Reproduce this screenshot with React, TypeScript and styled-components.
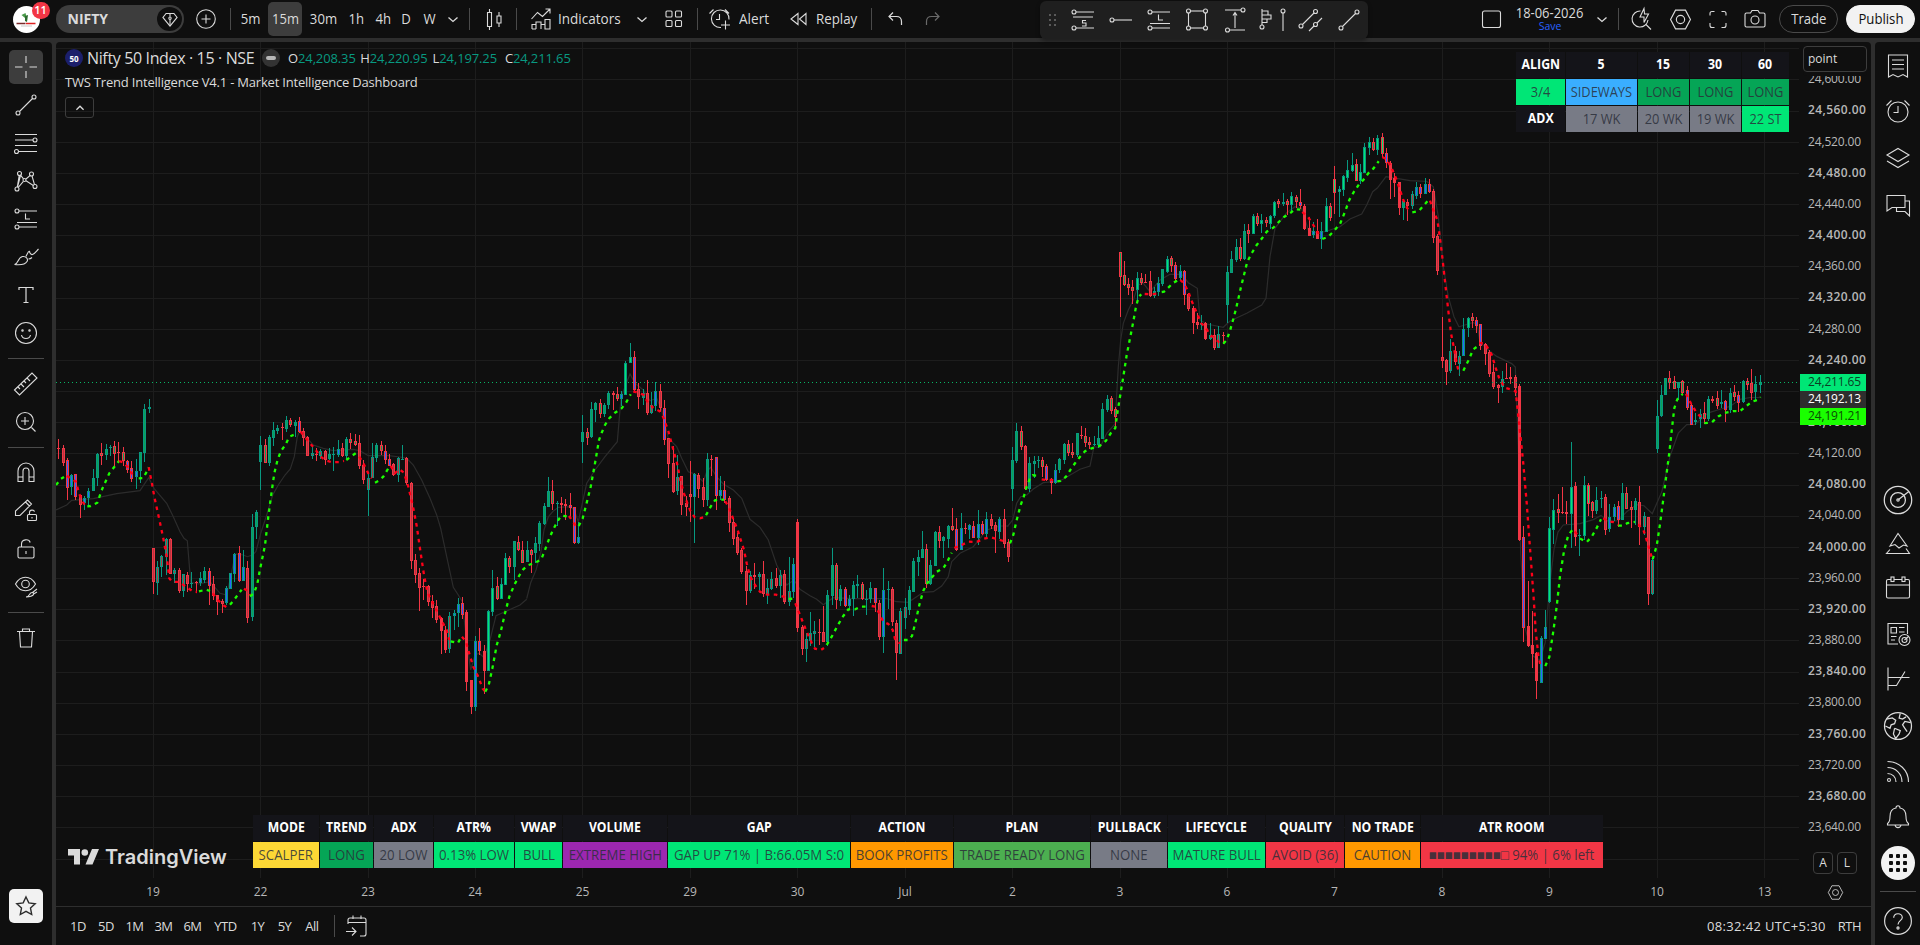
import { Fragment, ReactNode } from "react"
import styled, { createGlobalStyle } from "styled-components"

const UP = "#089981"
const DOWN = "#f23645"

const INNER: Record<string, string> = {
  G: "#0aa356",
  E: "#00e676",
  B: "#2962ff",
  R: "#b53640",
}

// bar = border/fill code, then high, body top, body bottom, low
const SESSIONS = [
  { start: -22, base: 330, unit: 3, bars: "rR 327 354 357 387,rR 345 354 399 408,rB 384 390 474 510,gB 432 435 471 494,rB 432 432 501 510,rR 495 495 525 564,gB 498 504 519 540,gB 474 483 504 532,gG 417 444 483 483,gG 369 372 444 468,rG 339 369 378 405,gG 342 357 375 390,gG 345 351 354 378,rG 333 348 372 414,rR 336 366 369 393,rG 351 366 394 408,rB 390 393 420 429,rB 393 414 447 456,gB 387 423 441 477,gG 366 366 423 459,gG 222 237 369 396,gG 207 231 237 249" },
  { start: 0, base: 330, unit: 3, bars: "rR 654 654 756 792,gR 693 711 759 795,gR 675 678 711 741,gR 624 627 681 735,rR 624 627 732 732,gR 714 720 732 759,rR 714 720 783 789,gR 732 732 783 801,rR 726 735 762 786,gS 726 759 762 774,rR 753 757 760 789,gB 726 744 759 768,gG 711 723 750 759,rB 714 723 768 825,rR 738 762 798 810,rS 795 795 816 855,rR 807 813 822 849,gB 768 774 819 825,gB 729 729 777 777,gB 669 672 732 756,rB 648 669 753 756,gB 660 711 753 753,rR 693 714 864 879,gG 552 591 861 873,gG 540 546 591 627" },
  { start: 25, base: 330, unit: 3, bars: "gG 318 345 396 480,rG 327 345 399 399,gG 315 321 399 408,gG 276 300 324 348,gG 285 294 303 312,rR 279 291 294 330,gG 258 270 297 306,rG 264 270 285 291,gG 270 276 288 321,rB 261 273 306 309,rR 294 303 324 348,rR 318 321 378 378,gR 348 369 378 387,rR 354 372 375 393,gR 357 363 378 387,rR 360 363 390 405,gG 354 372 387 390,gR 351 372 375 423,gB 330 357 375 381,rR 339 354 378 381,gG 321 327 378 387,rG 309 327 339 357,rG 312 333 345 348,rR 315 339 408 417,rR 390 405 450 462" },
  { start: 50, base: 330, unit: 3, bars: "gR 426 444 480 558,gR 339 381 444 444,gG 339 345 384 396,rG 333 345 363 375,rB 345 363 390 402,rB 372 387 408 408,rR 399 402 435 438,gR 381 384 435 456,gG 345 387 390 390,rR 381 384 459 465,rR 456 459 693 717,rR 672 690 735 759,rR 714 729 774 843,rR 747 768 771 810,rR 765 768 816 828,rR 795 813 834 864,rR 810 828 870 879,rS 861 864 903 972,rS 888 900 960 969,gR 846 858 957 969,gB 840 849 858 900,gB 804 822 849 891,rB 801 819 855 867,rS 840 846 1056 1083,rS 1050 1050 1131 1152" },
  { start: 75, base: 330, unit: 3, bars: "gB 918 933 1131 1143,rB 894 933 963 975,rS 945 963 1023 1092,gE 840 843 1023 1023,gE 720 774 846 858,rG 741 768 807 810,gE 744 762 807 807,gE 669 684 765 765,rG 678 684 711 729,gG 633 633 711 750,rG 618 636 660 663,rG 633 660 699 699,gG 633 660 696 696,rG 657 660 675 729,gG 621 639 669 699,gG 573 579 642 663,gG 519 528 582 585,gG 441 483 531 531,rG 450 483 522 540,gG 513 519 522 588,rR 501 519 525 549,rR 507 522 528 570,rB 489 525 534 567,rB 531 531 639 642,gB 576 621 639 642" },
  { start: 100, base: 330, unit: 3, bars: "gG 255 306 336 399,rG 294 306 324 345,gG 216 237 321 324,gG 216 219 240 276,rG 207 219 252 264,gG 219 225 252 261,gG 183 189 225 237,rG 183 189 195 240,rG 171 192 207 213,gB 183 192 207 228,gE 93 99 195 195,gE 39 81 99 99,rB 63 81 180 183,rR 159 177 201 237,gR 177 189 204 225,rR 150 189 249 255,gR 186 225 249 252,gB 156 183 228 243,rR 162 183 234 246,rB 210 234 330 345,rR 324 324 402 444,rR 348 399 486 489,gR 375 441 483 495,rR 438 438 525 555,rR 498 519 531 558" },
  { start: 125, base: 330, unit: 3, bars: "rR 393 492 501 576,gB 429 432 501 639,rR 429 435 477 504,rR 444 471 510 531,gG 369 387 510 528,rR 375 387 390 438,rB 381 381 498 540,gB 438 480 498 510,rB 453 480 510 519,rR 498 504 579 606,rR 564 576 627 645,rR 609 621 669 675,rR 654 660 726 732,rR 708 723 783 825,gR 723 735 783 789,rR 699 735 741 777,gR 726 732 741 780,rR 693 732 792 801,gR 747 774 792 822,gR 726 747 777 780,rR 714 744 768 774,gR 720 735 768 804,rR 720 732 816 822,gR 681 783 816 828,gB 684 702 786 804" },
  { start: 150, base: 330, unit: 3, bars: "rS 567 576 894 906,rR 885 891 957 975,gR 909 927 957 996,gR 846 909 933 948,gR 873 903 912 951,rR 867 906 909 945,rR 828 906 936 936,gG 780 795 936 948,gG 654 705 798 825,rG 699 705 810 837,gG 765 777 813 828,rB 771 777 828 831,gB 795 807 828 840,gG 753 765 807 858,gG 735 762 768 804,rG 756 762 807 810,gG 780 807 810 855,gG 756 774 807 819,rB 774 774 819 846,rR 810 819 921 930,gB 714 780 921 969,gG 753 777 780 837,rR 771 777 876 888,rR 870 879 969 1050,gR 834 843 972 972" },
  { start: 175, base: 330, unit: 3, bars: "gR 804 831 864 897,gG 768 780 840 855,gG 684 693 786 786,gG 660 681 696 738,gG 603 657 684 684,rG 642 657 762 774,gG 690 705 762 765,gG 603 606 708 708,rG 588 606 633 654,gG 618 621 633 684,gG 585 588 627 654,rG 534 588 600 603,rB 564 597 660 663,gB 549 594 660 660,rR 579 594 597 612,gB 582 585 600 627,rB 573 588 624 624,gB 540 582 624 645,rB 573 582 612 615,gB 546 567 612 624,rR 552 567 588 597,rR 576 585 603 669,gB 561 567 606 627,rR 537 567 642 654,rR 627 636 681 696" },
  { start: 200, base: 120, unit: 3, bars: "gG 981 1020 1107 1143,gG 909 933 1023 1029,rG 918 933 981 990,rR 975 978 1107 1110,gG 1011 1029 1107 1116,gG 1008 1023 1032 1074,gG 1008 1020 1023 1044,rG 1011 1020 1041 1071,rB 1032 1038 1080 1083,rB 1074 1077 1089 1122,gB 1032 1050 1089 1092,gG 1014 1017 1050 1059,gG 969 972 1020 1032,rG 960 972 999 1008,rG 969 996 1005 1014,gG 939 939 1005 1011,rR 918 945 948 957,rG 924 948 969 981,rG 951 966 975 987,gG 948 972 975 978,gG 918 954 975 984,gG 849 867 957 957,gG 825 837 870 876,rG 828 834 873 882,rG 861 867 891 924" },
  { start: 225, base: 120, unit: 3, bars: "rG 396 396 471 591,rG 423 465 495 498,rG 474 492 504 525,rG 480 501 513 552,gE 456 474 510 543,rG 459 474 489 495,rG 462 486 489 489,rR 453 483 528 531,gG 501 513 528 534,gB 471 489 516 528,gG 447 447 492 498,gE 408 417 456 459,rG 408 414 438 456,rB 426 435 477 483,gB 435 453 474 480,rB 450 453 525 555,rR 519 522 567 573,rS 558 564 609 642,rR 579 606 615 627,gR 585 609 615 630,rS 606 609 657 660,gR 609 645 657 660,rR 627 645 684 690,gR 618 642 684 684,rR 636 645 648 672" },
  { start: 250, base: 120, unit: 3, bars: "gG 438 456 555 609,gG 393 417 459 459,gG 357 381 420 426,rG 354 381 417 423,gG 312 333 417 420,rG 312 330 342 369,gE 282 288 342 342,rG 279 288 312 318,gE 282 300 312 339,rG 291 300 309 321,gE 285 288 312 327,gE 243 246 288 294,rG 237 243 252 264,gG 219 246 252 258,rG 237 243 255 285,gE 216 228 255 279,rG 225 231 246 264,rB 207 246 258 267,rS 252 258 327 330,rS 291 324 348 348,gB 306 333 345 354,rS 297 333 357 357,gB 306 333 357 387,gE 234 258 336 336,rG 249 258 294 303" },
  { start: 275, base: 120, unit: 3, bars: "rE 138 177 219 282,gE 198 207 216 291,gE 165 168 210 228,gE 120 150 174 186,gE 99 135 153 156,rE 117 132 183 183,gE 132 156 183 192,gE 69 81 159 159,gE 51 66 84 105,rG 54 66 90 93,gE 45 54 90 105,rE 39 51 102 111,rB 84 99 129 144,rS 123 129 180 237,rS 159 174 189 231,rS 186 186 264 285,gG 237 243 264 300,rR 237 246 258 303,gR 213 222 258 267,gB 186 201 228 237,rB 192 201 222 234,gB 174 192 222 222,rB 177 192 216 219,rR 207 213 354 369,rR 342 348 453 465" },
  { start: 300, base: 160, unit: 2.8, bars: "rR 440 552 563 582,rR 557 560 594 630,gR 501 535 591 596,rR 521 535 566 574,gR 535 549 571 605,gB 442 473 549 549,gE 440 442 470 496,rG 428 440 451 470,rB 440 448 465 484,rB 459 459 521 532,rR 512 515 543 574,rR 532 538 599 608,rR 571 594 636 641,rR 627 630 638 680,gR 591 613 636 652,rS 568 610 613 613,rS 580 608 613 627,rR 602 608 638 661,rS 627 633 1064 1067,rB 1025 1056 1310 1350,rS 1179 1305 1361 1364,rS 1263 1358 1383 1422,rS 1378 1380 1459 1509,gB 1333 1338 1464 1464,gB 1260 1308 1341 1341" },
  { start: 325, base: 160, unit: 2.8, bars: "gE 1000 1030 1238 1240,gE 949 980 1036 1075,rG 935 977 988 1017,rS 916 986 989 991,rR 955 986 991 1019,gE 790 916 991 1086,rS 902 913 1056 1081,gG 1033 1050 1053 1109,gE 885 910 1053 1064,rE 904 910 963 997,rG 955 958 983 1002,gG 916 952 983 991,gG 927 946 949 974,rR 935 944 1036 1050,gB 963 1000 1033 1042,gB 963 972 1000 1011,rB 955 969 1008 1028,gG 904 932 1008 1008,rG 916 932 977 977,rG 955 972 980 1030,gG 946 955 980 1022,rR 913 958 1028 1078,gR 986 997 1028 1050,rR 1000 1000 1215 1246,gR 1117 1120 1215 1218" },
  { start: 350, base: 160, unit: 2.8, bars: "gG 672 717 809 820,gG 630 658 717 720,gG 610 610 658 658,rG 591 610 624 641,rG 605 619 641 641,gG 622 622 638 672,rG 616 619 652 655,rB 633 644 694 700,rB 683 686 742 742,gB 708 728 734 742,gB 697 711 725 750,rG 678 708 725 739,gG 661 669 725 731,rG 661 669 675 680,rG 647 666 689 697,gG 644 678 683 694,rB 672 675 700 734,gG 638 652 700 708,rG 630 650 664 675,rB 647 658 680 706,gG 616 619 678 680,rG 610 619 630 644,rR 585 624 652 672,gG 605 627 650 675,gG 602 622 630 652" },
]

// trend line and baseline, in blocks that share one origin and scale
const LINES = [
  {
    x: 50, y: 330, sx: 3, sy: 3,
    trend: [
      "g 18,465 32,447 42,441",
      "r 50,438 62,445 78,455 87,490 98,516 105,525",
      "g 112,529 122,528 142,518 157,476 178,430 195,408 207,393",
      "r 207,393 222,398 232,410 245,430 258,440",
      "g 266,445 280,444 290,425 296,412",
      "r 296,412 306,461 313,500 330,578 340,625 350,680 358,745 366,755 388,756 410,772 430,785 441,786",
      "g 447,784 468,779 480,783",
      "r 488,790 505,811 517,824 530,832",
      "g 540,824 552,810 568,788 575,779",
      "r 582,776 592,782 600,795",
      "g 600,799 612,790 622,762 630,718 645,646 655,560 665,484 673,430 683,388 693,363 706,345 718,320 736,313 744,311",
      "r 752,305 765,322 780,340 795,357 810,378 825,390 845,397 870,396 882,393",
      "g 889,390 905,378 918,369",
      "r 928,380 940,400 955,430 965,445",
      "g 975,458 985,453 1000,440 1015,415",
      "r 1022,408 1035,430 1048,418 1062,428 1075,470 1088,525 1100,588 1112,670 1122,735 1132,785 1145,812 1160,842 1175,872 1190,900 1198,930",
      "g 1202,934 1224,939 1234,920",
      "r 1236,920 1248,935 1256,965 1270,1010 1285,1040 1298,1076 1306,1085",
      "g 1306,1085 1316,1065 1327,1016 1340,946 1352,905 1365,850 1378,800 1393,765 1407,738 1420,718 1433,706 1456,698 1474,688 1485,660 1498,625 1510,598 1525,570 1534,557 1555,560",
    ],
    base: "18,540 50,525 65,511 130,506 200,491 270,482 296,443 312,475 350,520 370,560 390,605 402,625 412,632 422,757 445,762 480,755 510,790 530,795 541,745 556,672 580,675 592,680 608,675 618,664 632,610 650,555 668,495 685,465 705,435 721,417 733,380 742,320 748,305 765,318 790,345 820,355 850,362 910,358 930,362 955,377 1010,376 1050,381 1070,385 1090,405 1115,450 1140,505 1160,555 1172,595 1190,680 1210,772 1225,795 1237,815 1250,935 1262,1020 1275,975 1288,970 1302,983 1320,930 1338,857 1370,843 1410,825 1430,808",
  },
  {
    x: 520, y: 330, sx: 3, sy: 3,
    trend: [
      "r 147,558 160,577 170,592",
      "g 176,588 188,565 200,518 212,470 225,400 237,330 245,308 255,285 268,265 285,248 304,236 318,218 332,193",
      "r 340,184 358,190 372,195 382,215 398,232 418,243 430,262 445,303 457,348 470,395 482,455 492,490 502,520 512,545 524,562 540,565 550,562",
      "g 558,556 572,530 585,511 600,507 612,510",
      "r 616,514 628,535 640,568 652,597 664,635 672,660 680,700 690,738 705,765 720,785 742,794 768,794 790,800 805,806",
      "g 806,807 820,806",
      "r 826,820 838,850 848,875 862,910 875,938 885,956 902,960 912,954",
      "g 920,945 935,920 955,883 970,858 985,838 1005,838 1022,830 1050,830",
      "r 1055,828 1066,830 1078,850 1090,875 1105,882 1118,900 1126,930 1140,940",
      "g 1152,930 1165,930 1176,918 1188,870 1198,825 1210,782 1222,760 1236,742 1250,725 1270,715 1282,695 1295,668",
      "r 1303,654 1325,645 1345,635 1370,636 1392,626 1412,622 1435,628 1452,634",
    ],
    base: "20,806 32,758 48,720 62,670 72,600 85,560 100,543 115,532 150,530 163,540 175,575 188,515 200,460 225,420 255,380 292,335 303,205 315,170 330,132 345,160 370,180 390,212 410,205 425,240 445,325 470,350 485,385 505,425 525,432 550,455 560,425 572,412 590,440 610,462 640,480 665,505 690,568 720,592 745,630 770,705 800,765 822,750 840,778 870,797 890,808 910,824 940,803 1000,806 1100,806 1130,815 1165,817 1210,787 1240,785 1265,768 1285,740 1295,695 1320,670 1360,650 1400,600 1440,588 1466,588",
  },
  {
    x: 1000, y: 120, sx: 3, sy: 3,
    trend: [
      "g 30,1270 40,1245 50,1200 62,1155 72,1128 80,1100 90,1075 98,1066 115,1067",
      "r 125,1078 140,1080 155,1080 166,1081",
      "g 172,1084 182,1083 198,1070 212,1048 225,1030 240,1010 255,994 275,985 300,977 318,962 332,940 346,924 352,880 360,830 370,770 380,705 390,655 400,605 408,560 416,530 424,523",
      "r 434,522 450,523 464,522 476,515",
      "g 485,516 492,515 508,500 520,488 532,482",
      "r 541,480 552,490 565,515 576,545 590,578 604,610 616,620 630,645 645,655 658,668",
      "g 670,671 680,660 690,632 702,590 712,550 722,505 732,465 742,425 756,398 770,375 786,355 800,335 820,323 836,306 852,291 870,280 885,268 901,269",
      "r 907,276 925,292 940,315 952,335 960,350",
      "g 967,357 985,350 1000,335 1020,312 1035,275 1048,240 1062,215 1077,193 1090,180 1105,160 1120,146 1136,124",
      "r 1147,111 1160,118 1175,145 1188,175 1200,210 1210,240 1222,265 1232,275",
      "g 1237,277 1256,273 1270,258 1287,238",
      "r 1290,242 1300,270 1312,300 1318,340 1325,395 1333,465 1340,530 1347,590 1353,640 1362,685 1370,730 1378,762",
    ],
    base: "22,1220 38,1200 50,1150 62,1130 80,1125 100,1107 130,1088 180,1083 240,1048 270,1038 282,980 300,983 320,940 345,912 355,740 362,660 370,610 385,570 400,540 415,495 430,490 450,515 480,480 510,463 545,463 565,488 592,505 600,600 620,612 670,622 690,603 740,580 785,555 798,535 810,410 825,325 860,278 885,260 905,265 925,330 955,340 990,330 1020,320 1050,297 1085,282 1100,255 1118,215 1132,204 1158,170 1190,175 1230,182 1280,184 1300,200 1315,290 1330,440 1345,530 1362,590 1377,621",
  },
  {
    x: 1400, y: 160, sx: 3, sy: 2.8,
    trend: [
      "g 190,590 205,562 220,530 232,522",
      "r 238,512 256,515 275,545 288,585 298,612 315,638 335,643 347,648 352,690 360,760 370,850 380,960 388,1060 395,1150 402,1240 407,1320 415,1385 422,1420",
      "g 436,1417 448,1392 460,1320 470,1250 480,1165 492,1095 505,1050 520,1033",
      "r 524,1040 535,1052",
      "g 540,1060 560,1070 575,1055 590,1030 603,1006",
      "r 610,1003 625,1012 640,1014 655,1022",
      "g 655,1024 668,1024 682,1017 705,1013",
      "r 715,1020 730,1035 742,1070 755,1112",
      "g 758,1118 770,1080 780,1020 790,950 798,890 808,820 816,750 823,695 832,670 848,655",
      "r 858,655 872,680 888,705 905,722",
      "g 913,737 935,735 955,718 975,708 1000,703 1020,703 1040,688 1055,677 1072,672 1082,664",
    ],
    base: "177,467 220,455 232,462 240,510 260,528 290,550 335,570 346,580 355,800 362,1100 375,1310 400,1390 420,1400 436,1350 448,1200 462,1090 474,1042 490,1022 540,1018 580,1007 603,995 625,1012 655,1010 680,985 710,965 732,968 757,990 785,930 810,830 835,765 860,741 885,740 925,708 960,698 990,690 1020,670 1050,665 1082,665",
  },
]

const DAYS = ["19", "22", "23", "24", "25", "29", "30", "Jul", "2", "3", "6", "7", "8", "9", "10", "13"]
const DAY_X = [153, 260, 368, 475, 582, 690, 797, 905, 1012, 1120, 1227, 1334, 1442, 1549, 1657, 1764]
const PRICES = Array.from({ length: 25 }, (_, i) => 24600 - i * 40)

const barX = (i: number) => Math.floor(153.3 + i * 4.2965)

// the tick right behind the price tags stays blank
const priceLabel = (p: number) => (p === 24200 ? "" : `${p.toLocaleString("en-US")}.00`)

const project = (pts: string, l: { x: number; y: number; sx: number; sy: number }) =>
  pts
    .split(" ")
    .map((p) => {
      const [a, b] = p.split(",").map(Number)
      return `${(l.x + a / l.sx).toFixed(1)},${(l.y + b / l.sy).toFixed(1)}`
    })
    .join(" ")

function Candles() {
  return (
    <>
      {SESSIONS.map((s) =>
        s.bars.split(",").map((bar, n) => {
          const [code, ...nums] = bar.split(" ")
          const [high, top, bottom, low] = nums.map((v) => Math.round(s.base + Number(v) / s.unit))
          const x = barX(s.start + n)
          const edge = code[0] === "g" ? UP : DOWN
          const h = Math.max(1, bottom - top)
          return (
            <Fragment key={`${s.start}-${n}`}>
              <rect x={x} y={high} width={1} height={Math.max(1, low - high)} fill={edge} />
              <rect x={x - 1} y={top} width={3} height={h} fill={edge} />
              {h > 2 && code[1] !== "S" && (
                <rect x={x} y={top + 1} width={1} height={h - 2} fill={INNER[code[1]]} />
              )}
            </Fragment>
          )
        })
      )}
    </>
  )
}

function Plot() {
  return (
    <svg width={1744} height={836} viewBox="56 42 1744 836" shapeRendering="crispEdges">
      {DAY_X.map((x) => (
        <rect key={x} x={x} y={42} width={1} height={836} fill="#1d1d1d" />
      ))}
      {Array.from({ length: 27 }, (_, i) => (
        <rect key={i} x={56} y={Math.floor(48.7 + 31.17 * i)} width={1743} height={1} fill="#1d1d1d" />
      ))}
      <g shapeRendering="auto" fill="none" stroke="#2c2c2c" strokeWidth={1.2}>
        {LINES.map((l) => (
          <polyline key={l.x} points={project(l.base, l)} />
        ))}
      </g>
      <Candles />
      <g shapeRendering="auto" fill="none" strokeWidth={2.3}>
        {LINES.map((l) =>
          l.trend.map((t) => (
            <polyline
              key={t}
              points={project(t.slice(2), l)}
              stroke={t[0] === "g" ? "#1aff00" : "#ff0019"}
              strokeDasharray="3.6 4.4"
            />
          ))
        )}
      </g>
      <line x1={56} x2={1799} y1={382.5} y2={382.5} stroke="#08b565" strokeDasharray="1 3" />
    </svg>
  )
}

type IconProps = { size?: number; w?: number; children: ReactNode }

function Icon({ size = 28, w = 1.1, children }: IconProps) {
  return (
    <svg width={size} height={size} viewBox="0 0 28 28" fill="none" stroke="currentColor" strokeWidth={w}>
      {children}
    </svg>
  )
}

const Chevron = () => (
  <Icon w={1.3}><path d="M9.5 12.500l4.500 4 4.500-4" /></Icon>
)

const Hexagon = ({ size = 28 }) => (
  <Icon size={size}>
    <path d="M9.200 5h9.600l4.800 9-4.800 9H9.200l-4.800-9z" />
    <circle cx="14" cy="14" r="4" />
  </Icon>
)

const TrendLine = () => (
  <Icon>
    <circle cx="6" cy="22" r="2" />
    <circle cx="22" cy="6" r="2" />
    <path d="M7.500 20.500l13-13" />
  </Icon>
)

const LongPosition = ({ letter = "L" }) => (
  <Icon>
    <circle cx="5" cy="6" r="2" />
    <circle cx="5" cy="22" r="2" />
    <path d="M7 6h18M7 22h18" />
    {letter === "L" ? <path d="M5 17.500h20M13.500 8.500v5.500H18" /> : <path d="M4 11h20M17 14.500h-3.500v2.500H17v3h-4" />}
  </Icon>
)

const LEFT_TOOLS: Record<string, ReactNode> = {
  trend: <TrendLine />,
  fib: (
    <Icon>
      <path d="M3 5.500h22M3 11h18M3 16.500h22M6 22.500h19" />
      <circle cx="23" cy="11" r="2" />
      <circle cx="4.500" cy="22.500" r="2" />
    </Icon>
  ),
  pattern: (
    <Icon>
      <circle cx="7.500" cy="6.500" r="2" />
      <circle cx="19.500" cy="7" r="2" />
      <circle cx="5" cy="22" r="2" />
      <circle cx="12.500" cy="13" r="1.500" />
      <circle cx="23" cy="19.500" r="2" />
      <path d="M7.200 8.500L5.300 20M8.500 8.200l3 3.600M6.200 20.500l5.200-6.200M14 12l4.200-3.700M20 9l2.500 8.600M14 13.800l7.300 4.700M8.500 8.500l-3 11.500" />
    </Icon>
  ),
  position: <LongPosition />,
  brush: (
    <Icon>
      <path d="M2.500 21.500c4-.5 3-7 8-8 3.500-.5 6 2.500 4.500 5-2 3.500-8 3.500-12.500 3zM14 13.500c1-2 2-5 3.500-5.500M16.500 16c1.500 0 2.500-.5 3.500-1.500M17.500 8c0 2 1.500 4 3 3.500 2.500-1 4-3.500 6-5.500" />
    </Icon>
  ),
  text: (
    <Icon w={1.2}><path d="M7 9V6.500h14V9M14 6.500v15M11.500 21.500h5" /></Icon>
  ),
  smile: (
    <Icon>
      <circle cx="14" cy="14" r="10.500" />
      <path d="M9.500 16c.5 2.500 2.300 3.500 4.500 3.500s4-1 4.500-3.500" />
      <circle cx="10.500" cy="11.500" r=".7" />
      <circle cx="17.500" cy="11.500" r=".7" />
    </Icon>
  ),
}

const MEASURE_TOOLS: Record<string, ReactNode> = {
  ruler: (
    <Icon>
      <path d="M2.500 20L20 3l5 5L7.500 25zM6 17l2 2M9 14l3 3M12 11l2 2M15 8l3 3" />
    </Icon>
  ),
  zoom: (
    <Icon>
      <circle cx="13" cy="13" r="8.500" />
      <path d="M19.500 19.500l4 4M9 13h8M13 9v8" />
    </Icon>
  ),
}

const LOCK_TOOLS: Record<string, ReactNode> = {
  magnet: (
    <Icon>
      <path d="M6 23.500V13a8 8 0 0116 0v10.500h-5V13a3 3 0 00-6 0v10.500zM6 19h5M17 19h5" />
    </Icon>
  ),
  pencil: (
    <Icon>
      <path d="M3.500 19.500V15L15.500 4l4 4L8 19.500zM13.500 6l4 4" />
      <rect x="15.500" y="18.500" width="9" height="6" rx="1" />
      <path d="M17.500 18.500v-2c0-3 4.500-3 5-.8M20 21v1.500" />
    </Icon>
  ),
  lock: (
    <Icon>
      <rect x="6" y="13" width="16" height="11" rx="1.500" />
      <path d="M9.500 13v-3c0-5 7.500-5.500 8.700-1.500M14 17v3" />
    </Icon>
  ),
  eye: (
    <Icon>
      <path d="M3.500 12c5-9 15-9 20 0-5 9-15 9-20 0z" />
      <circle cx="13.500" cy="12" r="3.800" />
      <path d="M14 25c4 0 3-4.500 6-4.500s3 4-6 4.500zM20.500 20.500l4.500-3.500M21.500 22l3.500-2" stroke="#0f0f0f" strokeWidth="4" />
      <path d="M14 25c4 0 3-4.500 6-4.500s3 4-6 4.500zM20.500 20.500l4.500-3.500M21.500 22l3.500-2" />
    </Icon>
  ),
}

const Trash = () => (
  <Icon>
    <path d="M5 7.500h18M7.500 7.500l1 15.500h11l1-15.500M10.500 7.500V5h7v2.500" />
  </Icon>
)

const RIGHT_TOOLS: { h: number; icon: ReactNode }[] = [
  { h: 48, icon: <Icon><path d="M4.500 3h19v22l-4.500-2.500-5 2.500-5-2.500L4.500 25zM8 8h12M8 12.500h12M8 17h12" /></Icon> },
  { h: 42, icon: <Icon><circle cx="14" cy="15" r="10" /><path d="M14 9v6.500H9.500M2.500 8.500l5-5M25.500 8.500l-5-5" /></Icon> },
  { h: 51, icon: <Icon><path d="M3 11l11-6.500L25 11l-11 6.500zM3 17l11 6.500L25 17" /></Icon> },
  { h: 43, icon: <Icon><path d="M3 20V4.500h18v12H8zM21 10h4.500v15L21 20.500h-8.500v-4" /></Icon> },
]

const LOWER_TOOLS: { h: number; icon: ReactNode }[] = [
  { h: 44, icon: <Icon size={32}><circle cx="14" cy="14" r="12" /><circle cx="14" cy="14" r="6.500" /><circle cx="14" cy="14" r="1" /><path d="M14.500 13.500l9-7" /></Icon> },
  { h: 42, icon: <Icon><path d="M6 17L14 4.500l9 12.500-3.500-1-4.500 3-4-3.500zM6 20.500l-3.500 4h23L22 19.500" /></Icon> },
  { h: 48, icon: <Icon><rect x="2.500" y="5.500" width="23" height="18.500" rx="1.500" /><path d="M2.500 11h23" /><rect x="7" y="3" width="3" height="4.500" fill="#0f0f0f" /><rect x="18" y="3" width="3" height="4.500" fill="#0f0f0f" /></Icon> },
  { h: 44, icon: <Icon><path d="M14 24H4V3.500h19.500V14M7 7.500h5.500V13H7zM15 7.500h5.500M15 12h5.500M7 16.500h5.500M7 20h4" /><circle cx="20.500" cy="20" r="5.500" /><circle cx="20.500" cy="20" r="2.500" /><path d="M20.500 20l4-3.500" /></Icon> },
  { h: 46, icon: <Icon><path d="M4 2.500v23M4 12.500h21.500M4 20.500h8.500L21 6.500" /></Icon> },
  { h: 48, icon: <Icon size={32}><circle cx="14" cy="14" r="11.800" /><path d="M4 8l5-1 3 2-1 3-3 1-1 3-4-2M11 16l5 2-1 3-3 4-2-4 1-5M16 3l-1 4 3 1 3-2M25 11l-5-1-2 3 2 3 2 3" /></Icon> },
  { h: 42, icon: <Icon><circle cx="5" cy="23" r="1.500" /><path d="M3.500 16.500c5 0 8.500 3.500 8.500 8.500M3.500 10.500c8 0 14.500 6 14.500 14.500M3.500 4.500C15 4.500 24.500 13 24.500 25" /></Icon> },
  { h: 50, icon: <Icon><path d="M3.500 20.500c2.500-1.500 2.500-4 2.500-7C6 7.500 9 5.500 12 5c0-3 4-3 4 0 3 .5 6 2.500 6 8.500 0 3 0 5.500 2.500 7V22h-21zM11 22c.5 3.500 5.500 3.500 6 0" /></Icon> },
]

const FAVORITES: ReactNode[] = [
  <LongPosition letter="S" />,
  <Icon><circle cx="5" cy="14" r="2" /><path d="M7 14h18" /></Icon>,
  <LongPosition />,
  <Icon><rect x="5.500" y="5" width="17" height="17" /><g fill="#1f1f1f"><circle cx="5.500" cy="5" r="2" /><circle cx="22.500" cy="5" r="2" /><circle cx="5.500" cy="22" r="2" /><circle cx="22.500" cy="22" r="2" /></g></Icon>,
  <Icon><path d="M4 4h16M8.500 24H24M14 22V7M12 9.500L14 6.500l2 3" /><circle cx="22" cy="4" r="2" /><circle cx="6.500" cy="24" r="2" /></Icon>,
  <Icon><path d="M3 3v16M3 5h6v4H3M3 9h9v4H3M3 13h5v3.500H3M24 7v18" /><circle cx="3" cy="21" r="2" /><circle cx="24" cy="5" r="2" /></Icon>,
  <Icon><path d="M5.500 18.500L17 7M12 25l5-5M20 17l5-5" /><circle cx="4" cy="20" r="2" /><circle cx="18.500" cy="5.500" r="2" /><circle cx="18.500" cy="18.500" r="2" /></Icon>,
  <TrendLine />,
]

const ALIGN_ROWS: [string, string][][] = [
  [["ALIGN", ""], ["5", ""], ["15", ""], ["30", ""], ["60", ""]],
  [["3/4", "#00e676"], ["SIDEWAYS", "#3aaeff"], ["LONG", "#05a556"], ["LONG", "#05a556"], ["LONG", "#05a556"]],
  [["ADX", ""], ["17 WK", "#787b86"], ["20 WK", "#787b86"], ["19 WK", "#787b86"], ["22 ST", "#00e676"]],
]

const STATUS: [string, string, string][] = [
  ["MODE", "SCALPER", "#fdd835"],
  ["TREND", "LONG", "#05a556"],
  ["ADX", "20 LOW", "#787b86"],
  ["ATR%", "0.13% LOW", "#00e676"],
  ["VWAP", "BULL", "#00e676"],
  ["VOLUME", "EXTREME HIGH", "#9c27b0"],
  ["GAP", "GAP UP 71% | B:66.05M S:0", "#00e676"],
  ["ACTION", "BOOK PROFITS", "#ff9800"],
  ["PLAN", "TRADE READY LONG", "#4caf50"],
  ["PULLBACK", "NONE", "#787b86"],
  ["LIFECYCLE", "MATURE BULL", "#00e676"],
  ["QUALITY", "AVOID (36)", "#f23645"],
  ["NO TRADE", "CAUTION", "#ff9800"],
  ["ATR ROOM", "■■■■■■■■■□ 94% | 6% left", "#f23645"],
]

const RANGES: [string, number][] = [
  ["1D", 28], ["5D", 28], ["1M", 29], ["3M", 29], ["6M", 29], ["YTD", 37], ["1Y", 27], ["5Y", 27], ["All", 28],
]

export default function App() {
  return (
    <Page>
      <GlobalStyle />
      <TopBar>
        <Cell w={56}>
          <Avatar>
            <svg width="27" height="27" viewBox="0 0 27 27">
              <path d="M8.500 9l4-2 1.500 6-2-1z" fill="#4a9a4a" />
              <path d="M12 10l3-1-1 7-2-1z" fill="#2c6b2f" />
              <path d="M3.500 17.500h9" stroke="#7a2a2a" strokeWidth="1.500" />
              <path d="M13 17.500h9.500" stroke="#d22" strokeWidth="1.500" />
              <path d="M8 20h11" stroke="#bbb" strokeWidth=".8" />
            </svg>
            <Badge>11</Badge>
          </Avatar>
        </Cell>
        <SymbolPill>
          <Text b k={1}>NIFTY</Text>
          <PillDot>
            <Icon size={22} w={1.4}><path d="M9 7h10l4 5-9 11L5 12z" /><circle cx="14" cy="13" r="1.500" /><path d="M14 14.500V22M14 7v4" /></Icon>
          </PillDot>
        </SymbolPill>
        <Cell w={44}><Icon><circle cx="14" cy="14" r="9.300" /><path d="M9.500 14h9M14 9.500v9" /></Icon></Cell>
        <Divider w={5} />
        <Cell w={35}><Text k={0.94}>5m</Text></Cell>
        <ActiveCell w={34}><Text k={0.93}>15m</Text></ActiveCell>
        <Cell w={43}><Text k={0.94}>30m</Text></Cell>
        <Cell w={22}><Text k={0.94}>1h</Text></Cell>
        <Cell w={32}><Text k={0.94}>4h</Text></Cell>
        <Cell w={15}><Text k={0.94}>D</Text></Cell>
        <Cell w={31}><Text k={0.94}>W</Text></Cell>
        <Cell w={15}><Chevron /></Cell>
        <Divider w={18} />
        <Cell w={31}>
          <Icon><path d="M7.500 7.500h4v14h-4zM9.500 4v3.500M9.500 21.500V25M17 11h4v7h-4zM19 7v4M19 18v4" /></Icon>
        </Cell>
        <Divider w={14} />
        <Cell w={35}>
          <Icon><path d="M5 24v-4.500h4V24M9 24v-7h5v7M14 24v-4.500h4V24M18 24v-9.500h5V24zM4.500 14l6-6.500 5 4 7.500-7.500M18.500 4H23v4.500M5 24h4" /></Icon>
        </Cell>
        <Cell w={72} left><Text k={0.965}>Indicators</Text></Cell>
        <Cell w={24}><Chevron /></Cell>
        <Cell w={40}>
          <Icon><rect x="6" y="6" width="6" height="6" rx="1" /><rect x="15.500" y="6" width="6" height="6" rx="1" /><rect x="6" y="15.500" width="6" height="6" rx="1" /><rect x="15.500" y="15.500" width="6" height="6" rx="1" /></Icon>
        </Cell>
        <Divider w={7} />
        <Cell w={38}>
          <Icon><path d="M15 22.500a8.800 8.800 0 118-8M13.500 9v5.500H10M3.500 8.500l4-4M23 8.500l-4-4M19.500 15.500v9M15 20h9" /></Icon>
        </Cell>
        <Cell w={43} left><Text k={0.97}>Alert</Text></Cell>
        <Cell w={34}><Icon><path d="M13 8.500v11L6 14zM21 8.500v11L14.500 14z" /></Icon></Cell>
        <Cell w={52} left><Text k={0.95}>Replay</Text></Cell>
        <Divider w={7} />
        <Cell w={39}><Icon w={1.2}><path d="M20.500 20v-3.500c0-3.500-2-5-5-5h-7M12 7.500l-4 4 4 4" /></Icon></Cell>
        <Cell w={38} dim><Icon w={1.2}><path d="M7.500 20v-3.500c0-3.500 2-5 5-5h7M16 7.500l4 4-4 4" /></Icon></Cell>
        <Grow />
        <Cell w={25}><Icon><rect x="4.500" y="6" width="18" height="16.500" rx="2" /></Icon></Cell>
        <DateCell>
          <Text k={0.925}>18-06-2026</Text>
          <Save>Save</Save>
        </DateCell>
        <Cell w={12}><Chevron /></Cell>
        <Divider w={21} />
        <Cell w={26}>
          <Icon><path d="M12.500 6A8 8 0 1020 15M18 19.500l5 5M16 3.500l-4 8.500h4v5.500L20.500 9h-4z" /></Icon>
        </Cell>
        <Cell w={50}><Hexagon size={29} /></Cell>
        <Cell w={26}><Icon><path d="M6 10.500V8.500a2 2 0 012-2h2.500M17.500 6.500H20a2 2 0 012 2v2M22 18v2.500a2 2 0 01-2 2h-2.500M10.500 22.500H8a2 2 0 01-2-2V18" /></Icon></Cell>
        <Cell w={48}>
          <Icon><path d="M4 9.500c0-1 .5-1.500 1.500-1.500h4l1.500-2.500h6L18.500 8h4c1 0 1.500.5 1.500 1.500v11c0 1-.5 1.500-1.500 1.500h-17C4.500 22 4 21.500 4 20.500z" /><circle cx="14" cy="15" r="4" /></Icon>
        </Cell>
        <TradeButton><Text k={0.94}>Trade</Text></TradeButton>
        <PublishButton><Text k={0.94}>Publish</Text></PublishButton>
      </TopBar>

      <Favorites>
        <Handle><i /><i /><i /><i /><i /><i /></Handle>
        {FAVORITES.map((f, i) => <Cell w={38} key={i}>{f}</Cell>)}
      </Favorites>

      <Workspace>
        <LeftBar>
          <ToolButton on>
            <Icon><path d="M14 3v7M14 18v7M3 14h7.500M17.500 14H25" /></Icon>
          </ToolButton>
          <Spacer h={2} />
          {Object.entries(LEFT_TOOLS).map(([k, icon]) => <Tool key={k} h={38}>{icon}</Tool>)}
          <Rule h={13} />
          {Object.entries(MEASURE_TOOLS).map(([k, icon]) => <Tool key={k} h={38}>{icon}</Tool>)}
          <Rule h={12} />
          {Object.entries(LOCK_TOOLS).map(([k, icon]) => <Tool key={k} h={38}>{icon}</Tool>)}
          <Rule h={14} />
          <Tool h={38}><Trash /></Tool>
          <Grow />
          <ToolButton light>
            <Icon w={1.4}><path d="M14 5l2.800 5.900 6.400.8-4.700 4.400 1.200 6.400-5.700-3.100-5.700 3.100 1.200-6.400-4.700-4.400 6.400-.8z" /></Icon>
          </ToolButton>
        </LeftBar>

        <ChartPanel>
          <ChartBody>
            <PlotArea>
              <Plot />
              <Legend>
                <TitleRow>
                  <FiftyDot>50</FiftyDot>
                  <Title>Nifty 50 Index · 15 · NSE</Title>
                  <StatusDot />
                  {[["O", "24,208.35"], ["H", "24,220.95"], ["L", "24,197.25"], ["C", "24,211.65"]].map(([k, v]) => (
                    <Ohlc key={k}>{k}<b>{v}</b></Ohlc>
                  ))}
                </TitleRow>
                <StudyRow>TWS Trend Intelligence V4.1 - Market Intelligence Dashboard</StudyRow>
                <Collapse><Icon size={20} w={1.8}><path d="M9 16.500l5-5 5 5" /></Icon></Collapse>
              </Legend>
              <AlignTable>
                {ALIGN_ROWS.flat().map(([label, bg], i) => (
                  <TableCell key={i} bg={bg}><Text b={!bg} k={bg ? 0.92 : 0.88} mid>{label}</Text></TableCell>
                ))}
              </AlignTable>
              <Brand>
                <svg width="31" height="16" viewBox="0 0 31 16" fill="#dbdbdb">
                  <path d="M0 0h12v15.500H6V6.500H0zM24 0h7l-6.500 15.500h-7z" />
                  <circle cx="16.800" cy="3.500" r="3.300" />
                </svg>
                <BrandName>TradingView</BrandName>
              </Brand>
              <StatusTable>
                {STATUS.map(([label]) => (
                  <TableCell key={label} bg=""><Text b k={0.87} mid>{label}</Text></TableCell>
                ))}
                {STATUS.map(([label, value, bg]) => (
                  <TableCell key={label} bg={bg}><Text k={0.945} mid>{value}</Text></TableCell>
                ))}
              </StatusTable>
            </PlotArea>
            <PriceAxis>
              {PRICES.map((p, i) => (
                <Price key={p} strong={i % 2 === 1}>{priceLabel(p)}</Price>
              ))}
              <Currency>point</Currency>
              <PriceTags>
                <PriceTag bg="#00e676" fg="#0b3d25">24,211.65</PriceTag>
                <PriceTag bg="#2e2e2e" fg="#ffffff">24,192.13</PriceTag>
                <PriceTag bg="#1aff00" fg="#0b4d05">24,191.21</PriceTag>
              </PriceTags>
              <ScaleModes><kbd>A</kbd><kbd>L</kbd></ScaleModes>
            </PriceAxis>
            <TimeAxis>
              {DAYS.map((d, i) => (
                <Day key={d} w={(DAY_X[i + 1] ?? 1872) - DAY_X[i]}>{d}</Day>
              ))}
            </TimeAxis>
            <AxisSettings><Hexagon size={21} /></AxisSettings>
          </ChartBody>
          <BottomBar>
            {RANGES.map(([label, w]) => <Cell w={w} key={label}><Small>{label}</Small></Cell>)}
            <Divider w={16} />
            <Cell w={30}>
              <Icon><path d="M5 12V8a2 2 0 012-2h14a2 2 0 012 2v14a2 2 0 01-2 2h-4M5 10.500h18M10 3.500V7M18 3.500V7M3 19.500h9.500M9 15.500l4 4-4 4" /></Icon>
            </Cell>
            <Grow />
            <Clock>08:32:42 UTC+5:30</Clock>
            <Small>RTH</Small>
          </BottomBar>
        </ChartPanel>

        <RightBar>
          {RIGHT_TOOLS.map((t, i) => <Tool key={i} h={t.h}>{t.icon}</Tool>)}
          <Grow />
          {LOWER_TOOLS.map((t, i) => <Tool key={i} h={t.h}>{t.icon}</Tool>)}
          <Tool h={42}>
            <AppsButton>{Array.from({ length: 9 }, (_, i) => <i key={i} />)}</AppsButton>
          </Tool>
          <Rule h={15} />
          <Tool h={44}>
            <Icon size={30}><circle cx="14" cy="14" r="12.500" /><path d="M10 11c0-5 8-5 8-.3 0 3-4 3-4 6.500" /><circle cx="14" cy="20.500" r="1" /></Icon>
          </Tool>
        </RightBar>
      </Workspace>
    </Page>
  )
}

const GlobalStyle = createGlobalStyle`
  * {
    box-sizing: border-box;
  }
  body {
    margin: 0;
    background: #2e2e2e;
    overflow: hidden;
  }
`

const Page = styled.div`
  position: relative;
  width: 1920px;
  height: 945px;
  display: flex;
  flex-direction: column;
  gap: 4px;
  background: #2e2e2e;
  color: #dbdbdb;
  font-family: "Open Sans", "Noto Sans", sans-serif;
  font-size: 14px;
  white-space: nowrap;

  svg {
    display: block;
    flex: none;
  }
`

const TopBar = styled.div`
  display: flex;
  align-items: center;
  height: 38px;
  padding-right: 5px;
  background: #0f0f0f;
`

const Cell = styled.div<{ w: number; left?: boolean; dim?: boolean }>`
  flex: none;
  display: flex;
  align-items: center;
  justify-content: ${(p) => (p.left ? "flex-start" : "center")};
  width: ${(p) => p.w}px;
  color: ${(p) => (p.dim ? "#6a6a6a" : "inherit")};
`

const ActiveCell = styled(Cell)`
  height: 34px;
  margin-bottom: 1px;
  border-radius: 5px;
  background: #3d3d3d;
`

const Text = styled.span<{ k?: number; b?: boolean; mid?: boolean }>`
  display: inline-block;
  margin-bottom: ${(p) => (p.mid ? (p.b ? 4 : 2) : 1)}px;
  font-weight: ${(p) => (p.b ? 700 : p.mid ? 400 : 500)};
  transform: scaleX(${(p) => p.k ?? 1});
  transform-origin: ${(p) => (!p.mid && p.k && p.k >= 0.95 ? "left" : "center")};
`

const Divider = styled.div<{ w: number }>`
  flex: none;
  width: ${(p) => p.w}px;
  height: 22px;
  background: linear-gradient(#4a4a4a, #4a4a4a) center / 1px 100% no-repeat;
`

const Grow = styled.div`
  flex: 1;
`

const Avatar = styled.div`
  position: relative;
  width: 27px;
  height: 27px;
  margin-right: 4px;
  border-radius: 50%;
  background: #fff;
`

const Badge = styled.div`
  position: absolute;
  left: 19px;
  top: -4px;
  width: 18px;
  height: 17px;
  border-radius: 9px;
  background: #f23645;
  color: #fff;
  font-size: 11px;
  font-weight: 600;
  line-height: 16px;
  text-align: center;
`

const SymbolPill = styled.div`
  flex: none;
  display: flex;
  align-items: center;
  justify-content: space-between;
  width: 128px;
  height: 28px;
  padding: 0 2px 0 11.500px;
  border-radius: 14px;
  background: #3d3d3d;
`

const PillDot = styled.div`
  display: grid;
  place-items: center;
  width: 25px;
  height: 24px;
  border-radius: 50%;
  background: #0f0f0f;
`

const DateCell = styled.div`
  flex: none;
  display: flex;
  flex-direction: column;
  align-items: center;
  width: 92px;
  line-height: 17px;
  margin-top: -3px;
`

const Save = styled.span`
  color: #2962ff;
  font-size: 10.500px;
  line-height: 9px;
`

const TradeButton = styled.div`
  display: grid;
  place-items: center;
  width: 59px;
  height: 28px;
  border: 1px solid #4a4a4a;
  border-radius: 14px;
`

const PublishButton = styled(TradeButton)`
  width: 69px;
  margin-left: 8px;
  border-color: #f2f2f2;
  background: #f2f2f2;
  color: #0f0f0f;
`

const Favorites = styled.div`
  position: absolute;
  left: 1040px;
  top: 1px;
  display: flex;
  align-items: center;
  width: 328px;
  height: 38px;
  padding-left: 9px;
  border-radius: 6px;
  background: #1f1f1f;
  box-shadow: 0 2px 4px rgba(0, 0, 0, 0.4);
`

const Handle = styled.div`
  display: grid;
  grid-template-columns: 2px 2px;
  gap: 3px;
  width: 15px;

  i {
    width: 2px;
    height: 2px;
    background: #5a5a5a;
  }
`

const Workspace = styled.div`
  flex: 1;
  display: flex;
  gap: 4px;
`

const LeftBar = styled.div`
  display: flex;
  flex-direction: column;
  align-items: center;
  width: 52px;
  padding: 8px 0 22px;
  border-radius: 0 4px 0 0;
  background: #0f0f0f;
`

const ToolButton = styled.div<{ on?: boolean; light?: boolean }>`
  display: grid;
  place-items: center;
  width: 34px;
  height: 34px;
  border-radius: 5px;
  background: ${(p) => (p.light ? "#f2f2f2" : "#3d3d3d")};
  color: ${(p) => (p.light ? "#2e2e2e" : "inherit")};
`

const Tool = styled.div<{ h: number }>`
  flex: none;
  display: grid;
  place-items: center;
  height: ${(p) => p.h}px;
`

const Spacer = styled.div<{ h: number }>`
  height: ${(p) => p.h}px;
`

const Rule = styled.div<{ h: number }>`
  flex: none;
  width: 36px;
  height: ${(p) => p.h}px;
  background: linear-gradient(#4a4a4a, #4a4a4a) center / 100% 1px no-repeat;
`

const ChartPanel = styled.div`
  display: flex;
  flex-direction: column;
  width: 1815px;
  border-radius: 4px 4px 0 0;
  background: #0f0f0f;
`

const ChartBody = styled.div`
  display: grid;
  grid-template-columns: 1744px 71px;
  grid-template-rows: 836px 28px;
  border-bottom: 1px solid #2e2e2e;
`

const PlotArea = styled.div`
  position: relative;
`

const Legend = styled.div`
  position: absolute;
  left: 9px;
  top: 6px;
  display: flex;
  flex-direction: column;
`

const TitleRow = styled.div`
  display: flex;
  align-items: center;
  height: 20px;
`

const FiftyDot = styled.div`
  display: grid;
  place-items: center;
  width: 18px;
  height: 18px;
  border-radius: 50%;
  background: #1c1f6b;
  color: #fff;
  font-size: 8px;
  font-weight: 700;
`

const Title = styled.div`
  width: 175px;
  padding-left: 4px;
  font-size: 16px;
  letter-spacing: -0.36px;
`

const StatusDot = styled.div`
  display: grid;
  place-items: center;
  width: 18px;
  height: 18px;
  margin: 0 8px 0 4px;
  border-radius: 50%;
  background: #333;

  &::after {
    content: "";
    width: 10px;
    height: 4px;
    border-radius: 2px;
    background: #b8b8b8;
  }
`

const Ohlc = styled.div`
  width: 72.300px;
  font-size: 13px;
  letter-spacing: -0.12px;

  b {
    color: #089981;
    font-weight: 400;
  }
`

const StudyRow = styled.div`
  margin-top: 4px;
  font-size: 13px;
  line-height: 20px;
  letter-spacing: -0.2px;
`

const Collapse = styled.div`
  display: grid;
  place-items: center;
  width: 29px;
  height: 21px;
  margin-top: 5px;
  border: 1px solid #3d3d3d;
  border-radius: 3px;
`

const AlignTable = styled.div`
  position: absolute;
  left: 1460px;
  top: 10px;
  display: grid;
  grid-template-columns: 49px 71px 51px 51px 47px;
  grid-auto-rows: 26px;
  gap: 1px;
`

const TableCell = styled.div<{ bg: string }>`
  display: flex;
  align-items: center;
  justify-content: center;
  min-width: 0;
  background: ${(p) => p.bg || "#141419"};
  color: ${(p) => (p.bg ? "rgba(42, 46, 57, 0.85)" : "#fff")};
`

const StatusTable = styled.div`
  position: absolute;
  left: 197px;
  top: 773px;
  display: grid;
  grid-template-columns: 66px 53px 59px 80px 47px 104px 182px 102px 136px 76px 97px 78px 75px 182px;
  grid-auto-rows: 26px;
  gap: 1px;
`

const Brand = styled.div`
  position: absolute;
  left: 12px;
  top: 801px;
  display: flex;
  align-items: center;
  gap: 6px;
  height: 28px;
`

const BrandName = styled.span`
  color: #dbdbdb;
  font-family: Inter, sans-serif;
  font-size: 20px;
  font-weight: 600;
`

const PriceAxis = styled.div`
  position: relative;
  display: flex;
  flex-direction: column;
  padding: 21.300px 0 0 8px;
`

const Price = styled.div<{ strong: boolean }>`
  flex: none;
  height: 31.170px;
  color: #b8b8b8;
  font-size: 12px;
  font-weight: ${(p) => (p.strong ? 600 : 500)};
  letter-spacing: ${(p) => (p.strong ? 0.4 : -0.15)}px;
  line-height: 31px;
`

const Currency = styled.div`
  position: absolute;
  left: 3px;
  top: 4px;
  width: 64px;
  height: 26px;
  padding-left: 4px;
  border: 1px solid #3d3d3d;
  border-radius: 4px;
  background: #0f0f0f;
  box-shadow: 0 4px #0f0f0f;
  font-size: 12px;
  line-height: 23px;
`

const PriceTags = styled.div`
  position: absolute;
  left: 0;
  top: 332px;
`

const PriceTag = styled.div<{ bg: string; fg: string }>`
  width: 66px;
  height: 17px;
  padding-left: 8px;
  background: ${(p) => p.bg};
  color: ${(p) => p.fg};
  font-size: 12px;
  font-weight: 500;
  letter-spacing: -0.15px;
  line-height: 15px;
`

const ScaleModes = styled.div`
  position: absolute;
  left: 13px;
  top: 810px;
  display: flex;
  gap: 4px;

  kbd {
    width: 20px;
    height: 22px;
    border: 1px solid #3d3d3d;
    border-radius: 4px;
    font: 500 12px/20px "Open Sans", sans-serif;
    text-align: center;
  }
`

const TimeAxis = styled.div`
  display: flex;
  align-items: center;
  padding: 0 0 2px 43.500px;
  overflow: hidden;
`

const Day = styled.div<{ w: number }>`
  flex: none;
  width: ${(p) => p.w}px;
  color: #b8b8b8;
  font-size: 12px;
  font-weight: 500;
  text-align: center;
`

const AxisSettings = styled.div`
  display: flex;
  align-items: center;
  padding-left: 25px;
`

const BottomBar = styled.div`
  flex: 1;
  display: flex;
  align-items: center;
  padding: 0 10px 0 8px;
`

const Small = styled.span`
  margin-bottom: 1px;
  font-size: 13px;
  font-weight: 500;
  letter-spacing: -0.5px;
`

const Clock = styled(Small)`
  margin-right: 12px;
  letter-spacing: 0.35px;
`

const RightBar = styled.div`
  display: flex;
  flex-direction: column;
  align-items: center;
  width: 45px;
  padding-bottom: 2px;
  border-radius: 4px 0 0 0;
  background: #0f0f0f;
`

const AppsButton = styled.div`
  display: grid;
  grid-template-columns: repeat(3, 4px);
  gap: 3px;
  place-content: center;
  width: 34px;
  height: 34px;
  border-radius: 50%;
  background: #f2f2f2;

  i {
    height: 4px;
    border-radius: 1px;
    background: #0f0f0f;
  }
`
